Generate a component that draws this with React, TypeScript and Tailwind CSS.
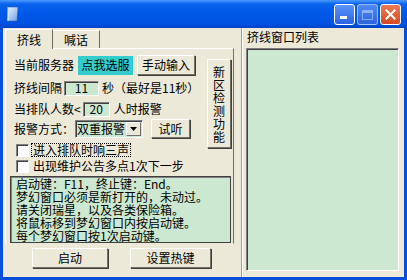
import React from 'react';

const font = "font-['Noto_Sans_CJK_SC','Noto_Sans',sans-serif]";

const Btn: React.FC<{ className?: string; children: React.ReactNode }> = ({ className = '', children }) => (
  <div
    className={`flex items-center justify-center bg-[#ECE9D8] border border-t-white border-l-white border-b-[#716F64] border-r-[#716F64] shadow-[1px_1px_0_#404040] text-[12px] text-black ${className}`}
  >
    {children}
  </div>
);

const Field: React.FC<{ className?: string; children: React.ReactNode }> = ({ className = '', children }) => (
  <div
    className={`flex items-center justify-center bg-[#CCE8D0] border border-t-[#808080] border-l-[#808080] border-b-white border-r-white shadow-[inset_1px_1px_0_#404040] text-[12px] leading-none ${className}`}
  >
    {children}
  </div>
);

const TitleBar: React.FC = () => (
  <div className="h-[28px] flex items-center pl-[5px] pr-[6px] bg-[linear-gradient(180deg,#4C9BFF_0%,#0A63EE_14%,#0058E8_50%,#0052E2_85%,#0043C4_100%)]">
    <svg width="16" height="16" viewBox="0 0 16 16" className="mt-[-1px]">
      <defs>
        <linearGradient id="bk" x1="0" x2="1" y1="0" y2="1">
          <stop offset="0" stopColor="#E8F2FF" />
          <stop offset="1" stopColor="#6FA3E8" />
        </linearGradient>
      </defs>
      <path d="M3 1 L13 1 L12 15 L2 15 Z" fill="url(#bk)" stroke="#2A5BB8" strokeWidth="0.6" />
      <path d="M3 1 L3 15" stroke="#ffffff" strokeWidth="1" opacity="0.7" />
    </svg>
    <div className="flex-1" />
    <div className="flex gap-[2px] mt-[1px]">
      <div className="w-[21px] h-[21px] rounded-[3px] border border-white bg-[linear-gradient(180deg,#5C95F8,#2A64E2)] flex items-end pl-[5px] pb-[5px]">
        <div className="w-[7px] h-[3px] bg-white" />
      </div>
      <div className="w-[21px] h-[21px] rounded-[3px] border border-white/50 bg-[linear-gradient(180deg,#4E88F0,#2D66DE)] flex items-center justify-center">
        <div className="w-[11px] h-[10px] border border-white/40 border-t-[3px]" />
      </div>
      <div className="w-[21px] h-[21px] rounded-[3px] border border-white bg-[linear-gradient(180deg,#EC7A55,#D44A24)] flex items-center justify-center">
        <svg width="11" height="11" viewBox="0 0 11 11">
          <path d="M1.5 1.5 L9.5 9.5 M9.5 1.5 L1.5 9.5" stroke="#fff" strokeWidth="2" strokeLinecap="square" />
        </svg>
      </div>
    </div>
  </div>
);

const Check: React.FC<{ label: string; focus?: boolean; className?: string }> = ({ label, focus, className = '' }) => (
  <div className={`flex items-center h-[14px] ${className}`}>
    <div className="ml-[2px] w-[13px] h-[13px] bg-white border border-t-[#808080] border-l-[#808080] border-b-white border-r-white shadow-[inset_1px_1px_0_#404040]" />
    <div className={`ml-[3px] px-[1px] text-[12px] leading-[12px] whitespace-nowrap ${focus ? 'outline-1 outline-dotted outline-black' : ''}`}>{label}</div>
  </div>
);

export default function App() {
  const lines = [
    '启动键：F11，终止键：End。',
    '梦幻窗口必须是新打开的，未动过。',
    '请关闭瑞星，以及各类保险箱。',
    '将鼠标移到梦幻窗口内按启动键。',
    '每个梦幻窗口按1次启动键。',
  ];

  return (
    <div className={`w-[407px] h-[280px] flex flex-col bg-[#0A4FDA] text-black ${font}`}>
      <TitleBar />
      <div className="flex-1 mx-[3px] mb-[3px] bg-[#ECE9D8] flex">
        {/* left column */}
        <div className="w-[234px] flex flex-col">
          <div className="h-[20px] flex items-end pl-[2px]">
            <div className="h-[20px] w-[48px] flex items-center justify-center text-[12px] leading-none bg-[#ECE9D8] border-t border-l border-white border-r border-r-[#716F64] relative z-10 mb-[-1px]">
              挤线
            </div>
            <div className="h-[18px] w-[47px] flex items-center justify-center text-[12px] leading-none border-t border-white border-r border-r-[#716F64]">
              喊话
            </div>
          </div>
          <div className="ml-[2px] w-[229px] h-[196px] border border-l-white border-t-white border-r-[#716F64] border-b-[#ECE9D8] flex flex-col">
            <div className="flex">
              <div className="ml-[8px] w-[193px] flex flex-col text-[12px] leading-none whitespace-nowrap">
                <div className="mt-[6px] h-[20px] flex items-center">
                  <span>当前服务器</span>
                  <div className="ml-[4px] w-[55px] h-[19px] bg-[#33CCCC] flex items-center justify-center">点我选服</div>
                  <Btn className="ml-[4px] w-[58px] h-[20px]">手动输入</Btn>
                </div>
                <div className="mt-[4px] h-[18px] flex items-center">
                  <span>挤线间隔</span>
                  <Field className="ml-[2px] w-[35px] h-[15px]">11</Field>
                  <span className="ml-[3px]">秒（最好是11秒）</span>
                </div>
                <div className="mt-[3px] h-[18px] flex items-center">
                  <span>当排队人数&lt;</span>
                  <Field className="ml-[2px] w-[27px] h-[15px]">20</Field>
                  <span className="ml-[4px]">人时报警</span>
                </div>
                <div className="mt-[1px] h-[19px] flex items-center">
                  <span>报警方式：</span>
                  <div className="ml-[1px] w-[68px] h-[18px] flex bg-[#CCE8D0] border border-t-[#808080] border-l-[#808080] border-b-white border-r-white shadow-[inset_1px_1px_0_#404040]">
                    <div className="flex-1 flex items-center pl-[1px] pt-[1px] overflow-hidden">双重报警</div>
                    <div className="w-[15px] shrink-0 mt-[1px] mb-[1px] mr-[1px] bg-[#ECE9D8] border border-t-white border-l-white border-b-[#716F64] border-r-[#716F64] flex items-center justify-center">
                      <svg width="7" height="4" viewBox="0 0 7 4">
                        <path d="M0 0 L7 0 L3.5 4 Z" fill="#000" />
                      </svg>
                    </div>
                  </div>
                  <Btn className="ml-[8px] w-[39px] h-[19px]">试听</Btn>
                </div>
                <Check className="mt-[5px]" label="进入排队时响三声" focus />
                <Check className="mt-[2px]" label="出现维护公告多点1次下一步" />
              </div>
              <Btn className="mt-[10px] w-[24px] h-[89px] flex-col">
                {['新', '区', '检', '测', '功', '能'].map((c) => (
                  <span key={c} className="block h-[13px] leading-[13px] text-center">
                    {c}
                  </span>
                ))}
              </Btn>
            </div>
            <div className="mt-[3px] ml-[4px] w-[221px] h-[67px] bg-[#CCE8D0] border border-[#404040] shadow-[inset_1px_1px_0_#808080] pl-[5px] text-[12px] leading-[13px]">
              {lines.map((l, i) => (
                <div key={i} className="h-[13px] whitespace-nowrap">
                  {l}
                </div>
              ))}
            </div>
          </div>
          <div className="mt-[4px] flex">
            <Btn className="ml-[29px] w-[76px] h-[20px]">启动</Btn>
            <Btn className="ml-[22px] w-[81px] h-[20px]">设置热键</Btn>
          </div>
        </div>
        {/* separator */}
        <div className="ml-[4px] w-px bg-[#A0A0A0]" />
        <div className="w-px bg-white" />
        {/* right column */}
        <div className="ml-[3px] flex flex-col">
          <div className="h-[20px] pt-[3px] pl-[1px] text-[12px] leading-none">挤线窗口列表</div>
          <div className="w-[153px] h-[223px] bg-[#CCE8D0] border border-t-[#808080] border-l-[#808080] border-b-white border-r-white shadow-[inset_1px_1px_0_#404040]" />
        </div>
      </div>
    </div>
  );
}
